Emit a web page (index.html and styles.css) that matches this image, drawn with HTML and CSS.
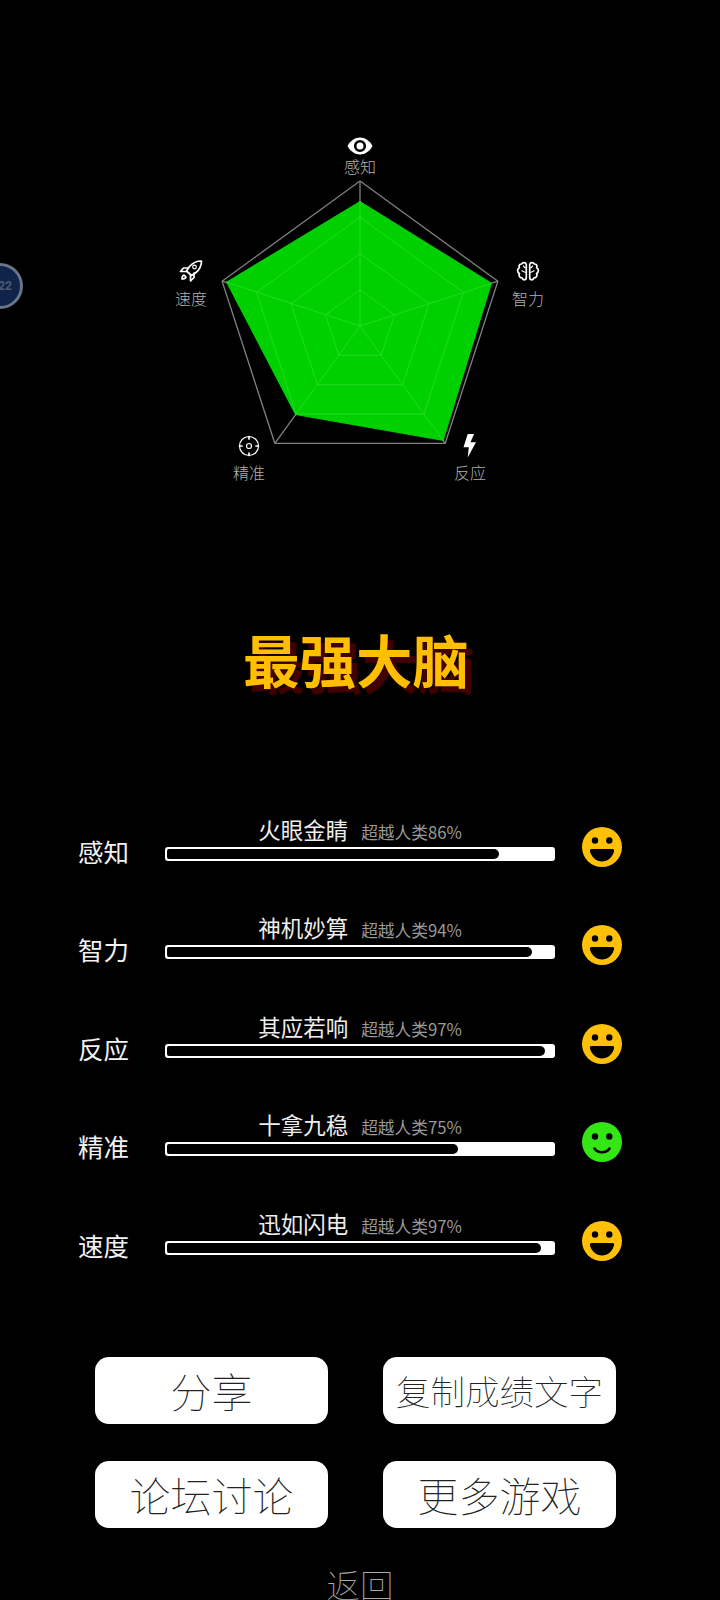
FILE: index.html
```html
<!DOCTYPE html>
<html lang="zh-CN">
<head>
<meta charset="utf-8">
<title>最强大脑</title>
<link rel="stylesheet" href="styles.css">
</head>
<body>
<main class="page">
  <div class="bubble"><span class="bubble-text">22</span></div>

  <section class="radar">
    <svg class="radar-chart" width="720" height="500" viewBox="0 0 720 500">
      <polygon class="grid-outer" points="360,181 497.9,281.2 445.2,443.3 274.8,443.3 222.1,281.2"/>
      <path class="grid-outer" d="M360 326L360 181M360 326L497.9 281.2M360 326L445.2 443.3M360 326L274.8 443.3M360 326L222.1 281.2"/>
      <polygon class="data" points="360,201 492,283 443.5,441 295.3,415 226,282"/>
      <polygon class="grid-inner" points="360,217.25 463.4,292.4 423.9,414 296.1,414 256.6,292.4"/>
      <polygon class="grid-inner" points="360,253.5 429,303.6 402.6,384.7 317.4,384.7 291,303.6"/>
      <polygon class="grid-inner" points="360,289.75 394.5,314.8 381.3,355.3 338.7,355.3 325.5,314.8"/>
      <path class="grid-inner" d="M360 326L360 201M360 326L491.500 283.500M360 326L443.5 441M360 326L295.3 415M360 326L226 282"/>
    </svg>

    <div class="axis axis-top">
      <svg class="axis-icon" width="26" height="18" viewBox="0 0 26 18">
        <path class="i-fill" d="M0.5 9C3.5 3.5 8 0.5 13 0.5S22.500 3.500 25.500 9C22.500 14.500 18 17.500 13 17.500S3.500 14.500 0.500 9Z"/>
        <circle class="i-pupil" cx="13" cy="9" r="4.800"/>
      </svg>
      <span>感知</span>
    </div>
    <div class="axis axis-right">
      <svg class="axis-icon" width="24" height="22" viewBox="0 0 24 22">
        <path class="i-line" d="M10.300 3.500C10 1.300 6.800 0.700 5.700 3C3.800 2.800 2.300 4.700 3.400 6.700C1 7.900 1 11.300 3.400 12.500C2.300 14.700 3.800 17 6 16.800C7 19.700 10.300 19.300 10.300 16.500Z"/>
        <path class="i-line" d="M13.700 3.500C14 1.300 17.200 0.700 18.300 3C20.200 2.800 21.700 4.700 20.600 6.700C23 7.900 23 11.300 20.600 12.500C21.700 14.700 20.200 17 18 16.800C17 19.700 13.700 19.300 13.700 16.500Z"/>
        <path class="i-line i-thin" d="M10.300 7C8.800 7 7.800 6 7.500 5M10.300 11.500C8.500 11.500 7 10.500 6 9.800M13.700 7C15.200 7 16.200 6 16.500 5M13.700 11.500C15.500 11.500 17 10.500 18 9.800"/>
      </svg>
      <span>智力</span>
    </div>
    <div class="axis axis-react">
      <svg class="axis-icon" width="14" height="24" viewBox="0 0 14 24">
        <polygon class="i-fill" points="4.700,0 11,0 7.500,8.300 13,8.300 4.700,23.500 5.800,13.300 0.500,13.300"/>
      </svg>
      <span>反应</span>
    </div>
    <div class="axis axis-aim">
      <svg class="axis-icon" width="22" height="22" viewBox="0 0 22 22">
        <circle class="i-line i-thin" cx="11" cy="11" r="9.500"/>
        <circle class="i-line i-thin" cx="11" cy="11" r="2.500"/>
        <path class="i-line" d="M11 1.500V4M11 18V20.500M1.500 11H4M18 11H20.500"/>
      </svg>
      <span>精准</span>
    </div>
    <div class="axis axis-speed">
      <svg class="axis-icon" width="24" height="22" viewBox="0 0 24 22">
        <path class="i-line" d="M22.500 1C17.500 1 13.500 3 10.500 6.500L7.500 11L12.500 15.500L17 12.500C20.500 9.500 22.500 6 22.500 1Z"/>
        <path class="i-line" d="M9 8H4.500L1.500 11.500L7.500 11.500M15 13V17.500L11.500 21L11.500 15"/>
        <circle class="i-line i-thin" cx="15.500" cy="7" r="1.800"/>
        <path class="i-line" d="M5 15C3.500 15.500 3 17 3 19C5 19 6.500 18.500 7 17Z"/>
      </svg>
      <span>速度</span>
    </div>
  </section>

  <h1 class="title">最强大脑</h1>

  <section class="rows">
    <div class="row">
      <div class="row-label">感知</div>
      <div class="row-main">
        <div class="row-head"><span class="row-name">火眼金睛</span><span class="row-sub">超越人类86%</span></div>
        <div class="bar"><div class="bar-fill" style="width:86%"></div></div>
      </div>
      <svg class="smile" width="40" height="40" viewBox="0 0 40 40">
        <circle class="smile-gold" cx="20" cy="20" r="20"/>
        <circle class="smile-ink" cx="13" cy="13.500" r="3.200"/><circle class="smile-ink" cx="27.300" cy="13.500" r="3.200"/>
        <path class="smile-ink" d="M9.500 22H30.500C32 22 32.300 23 32 24.500C30.500 30.500 25.500 34.500 20 34.500S9.500 30.500 8 24.500C7.700 23 8 22 9.500 22Z"/>
      </svg>
    </div>
    <div class="row">
      <div class="row-label">智力</div>
      <div class="row-main">
        <div class="row-head"><span class="row-name">神机妙算</span><span class="row-sub">超越人类94%</span></div>
        <div class="bar"><div class="bar-fill" style="width:94.500%"></div></div>
      </div>
      <svg class="smile" width="40" height="40" viewBox="0 0 40 40">
        <circle class="smile-gold" cx="20" cy="20" r="20"/>
        <circle class="smile-ink" cx="13" cy="13.500" r="3.200"/><circle class="smile-ink" cx="27.300" cy="13.500" r="3.200"/>
        <path class="smile-ink" d="M9.500 22H30.500C32 22 32.300 23 32 24.500C30.500 30.500 25.500 34.500 20 34.500S9.500 30.500 8 24.500C7.700 23 8 22 9.500 22Z"/>
      </svg>
    </div>
    <div class="row">
      <div class="row-label">反应</div>
      <div class="row-main">
        <div class="row-head"><span class="row-name">其应若响</span><span class="row-sub">超越人类97%</span></div>
        <div class="bar"><div class="bar-fill" style="width:97.800%"></div></div>
      </div>
      <svg class="smile" width="40" height="40" viewBox="0 0 40 40">
        <circle class="smile-gold" cx="20" cy="20" r="20"/>
        <circle class="smile-ink" cx="13" cy="13.500" r="3.200"/><circle class="smile-ink" cx="27.300" cy="13.500" r="3.200"/>
        <path class="smile-ink" d="M9.500 22H30.500C32 22 32.300 23 32 24.500C30.500 30.500 25.500 34.500 20 34.500S9.500 30.500 8 24.500C7.700 23 8 22 9.500 22Z"/>
      </svg>
    </div>
    <div class="row">
      <div class="row-label">精准</div>
      <div class="row-main">
        <div class="row-head"><span class="row-name">十拿九稳</span><span class="row-sub">超越人类75%</span></div>
        <div class="bar"><div class="bar-fill" style="width:75.300%"></div></div>
      </div>
      <svg class="smile" width="40" height="40" viewBox="0 0 40 40">
        <circle class="smile-green" cx="20" cy="20" r="20"/>
        <circle class="smile-ink" cx="13" cy="14.500" r="3.200"/><circle class="smile-ink" cx="27.300" cy="14.500" r="3.200"/>
        <path class="smile-line" d="M12.500 26.500C16 31.500 24 31.500 27.500 26.500"/>
      </svg>
    </div>
    <div class="row">
      <div class="row-label">速度</div>
      <div class="row-main">
        <div class="row-head"><span class="row-name">迅如闪电</span><span class="row-sub">超越人类97%</span></div>
        <div class="bar"><div class="bar-fill" style="width:96.800%"></div></div>
      </div>
      <svg class="smile" width="40" height="40" viewBox="0 0 40 40">
        <circle class="smile-gold" cx="20" cy="20" r="20"/>
        <circle class="smile-ink" cx="13" cy="13.500" r="3.200"/><circle class="smile-ink" cx="27.300" cy="13.500" r="3.200"/>
        <path class="smile-ink" d="M9.500 22H30.500C32 22 32.300 23 32 24.500C30.500 30.500 25.500 34.500 20 34.500S9.500 30.500 8 24.500C7.700 23 8 22 9.500 22Z"/>
      </svg>
    </div>
  </section>

  <section class="actions">
    <button class="action">分享</button>
    <button class="action action-long">复制成绩文字</button>
    <button class="action">论坛讨论</button>
    <button class="action">更多游戏</button>
  </section>

  <div class="back">返回</div>
</main>
</body>
</html>
```

FILE: styles.css
```css
html, body {
  margin: 0;
  padding: 0;
  background: #000;
}

.page {
  position: relative;
  width: 720px;
  height: 1600px;
  overflow: hidden;
  background: #000;
  color: #fff;
  font-family: "Noto Sans CJK SC", "Noto Sans", sans-serif;
}

.bubble {
  position: absolute;
  left: -23px;
  top: 263px;
  width: 40px;
  height: 40px;
  border: 3px solid #69758a;
  border-radius: 50%;
  background: #10244a;
  display: flex;
  align-items: center;
  justify-content: flex-end;
  box-sizing: content-box;
}

.bubble-text {
  padding-right: 8px;
  font-family: "Roboto", sans-serif;
  font-size: 12px;
  font-weight: 700;
  color: #4c5a74;
}

.radar {
  position: relative;
  height: 621px;
}

.radar-chart {
  display: block;
}

.grid-outer {
  fill: none;
  stroke: #808080;
  stroke-width: 1.300;
}

.data {
  fill: #00d000;
}

.grid-inner {
  fill: none;
  stroke: #22dc22;
  stroke-width: 1;
}

.axis {
  position: absolute;
  display: flex;
  flex-direction: column;
  align-items: center;
  gap: 5px;
  width: 60px;
  font-size: 16px;
  line-height: 20px;
  color: #b0b0b0;
  font-weight: 300;
}

.axis-icon {
  display: block;
}

.axis-top { left: 330px; top: 137px; gap: 1px; }
.axis-right { left: 498px; top: 261px; }
.axis-react { left: 440px; top: 434px; gap: 4px; }
.axis-aim { left: 219px; top: 435px; gap: 5px; }
.axis-speed { left: 161px; top: 260px; gap: 6px; }

.i-fill { fill: #fff; }
.i-pupil { fill: #fff; stroke: #000; stroke-width: 2.600; }
.i-line { fill: none; stroke: #fff; stroke-width: 1.700; stroke-linejoin: round; stroke-linecap: round; }
.i-thin { stroke-width: 1.200; }

.title {
  margin: 0;
  padding-right: 8px;
  height: 74px;
  font-size: 56.500px;
  line-height: 74px;
  font-weight: 700;
  text-align: center;
  color: #ffbe00;
  text-shadow: 6px 6px 1px #420000;
}

.rows {
  margin-top: 121px;
}

.row {
  display: grid;
  grid-template-columns: 87px 390px 67px;
  padding-left: 78px;
  height: 98.400px;
  box-sizing: border-box;
}

.row-label {
  margin-top: 16px;
  font-size: 25.500px;
  line-height: 38px;
  color: #f2f2f2;
}

.row-main {
  display: flex;
  flex-direction: column;
  height: 45px;
  justify-content: flex-end;
}

.row-head {
  display: flex;
  justify-content: center;
  align-items: baseline;
  gap: 13px;
  height: 27px;
  margin-bottom: 4px;
  line-height: 26px;
}

.row-name {
  font-size: 22.500px;
  color: #eee;
}

.row-sub {
  font-size: 16.700px;
  color: #999;
}

.bar {
  height: 14px;
  padding: 2px;
  box-sizing: border-box;
  background: #fff;
  border-radius: 3px;
}

.bar-fill {
  height: 100%;
  background: #000;
  border-radius: 2px 5px 5px 2px;
}

.smile {
  justify-self: end;
  margin-top: 11px;
}

.smile-gold { fill: #ffc107; }
.smile-green { fill: #33e614; }
.smile-ink { fill: #000; }
.smile-line { fill: none; stroke: #000; stroke-width: 2.600; stroke-linecap: round; }

.actions {
  display: grid;
  grid-template-columns: 233px 233px;
  grid-auto-rows: 67px;
  column-gap: 55px;
  row-gap: 37px;
  margin-top: 49px;
  padding-left: 95px;
}

.action {
  border: 0;
  padding: 0;
  border-radius: 14px;
  background: #fff;
  color: #222;
  font-family: inherit;
  font-size: 41px;
  font-weight: 100;
  line-height: 67px;
}

.action-long {
  font-size: 34.500px;
}

.back {
  margin-top: 34px;
  text-align: center;
  font-size: 33.500px;
  font-weight: 100;
  line-height: 44px;
  color: #aaa;
}
```
